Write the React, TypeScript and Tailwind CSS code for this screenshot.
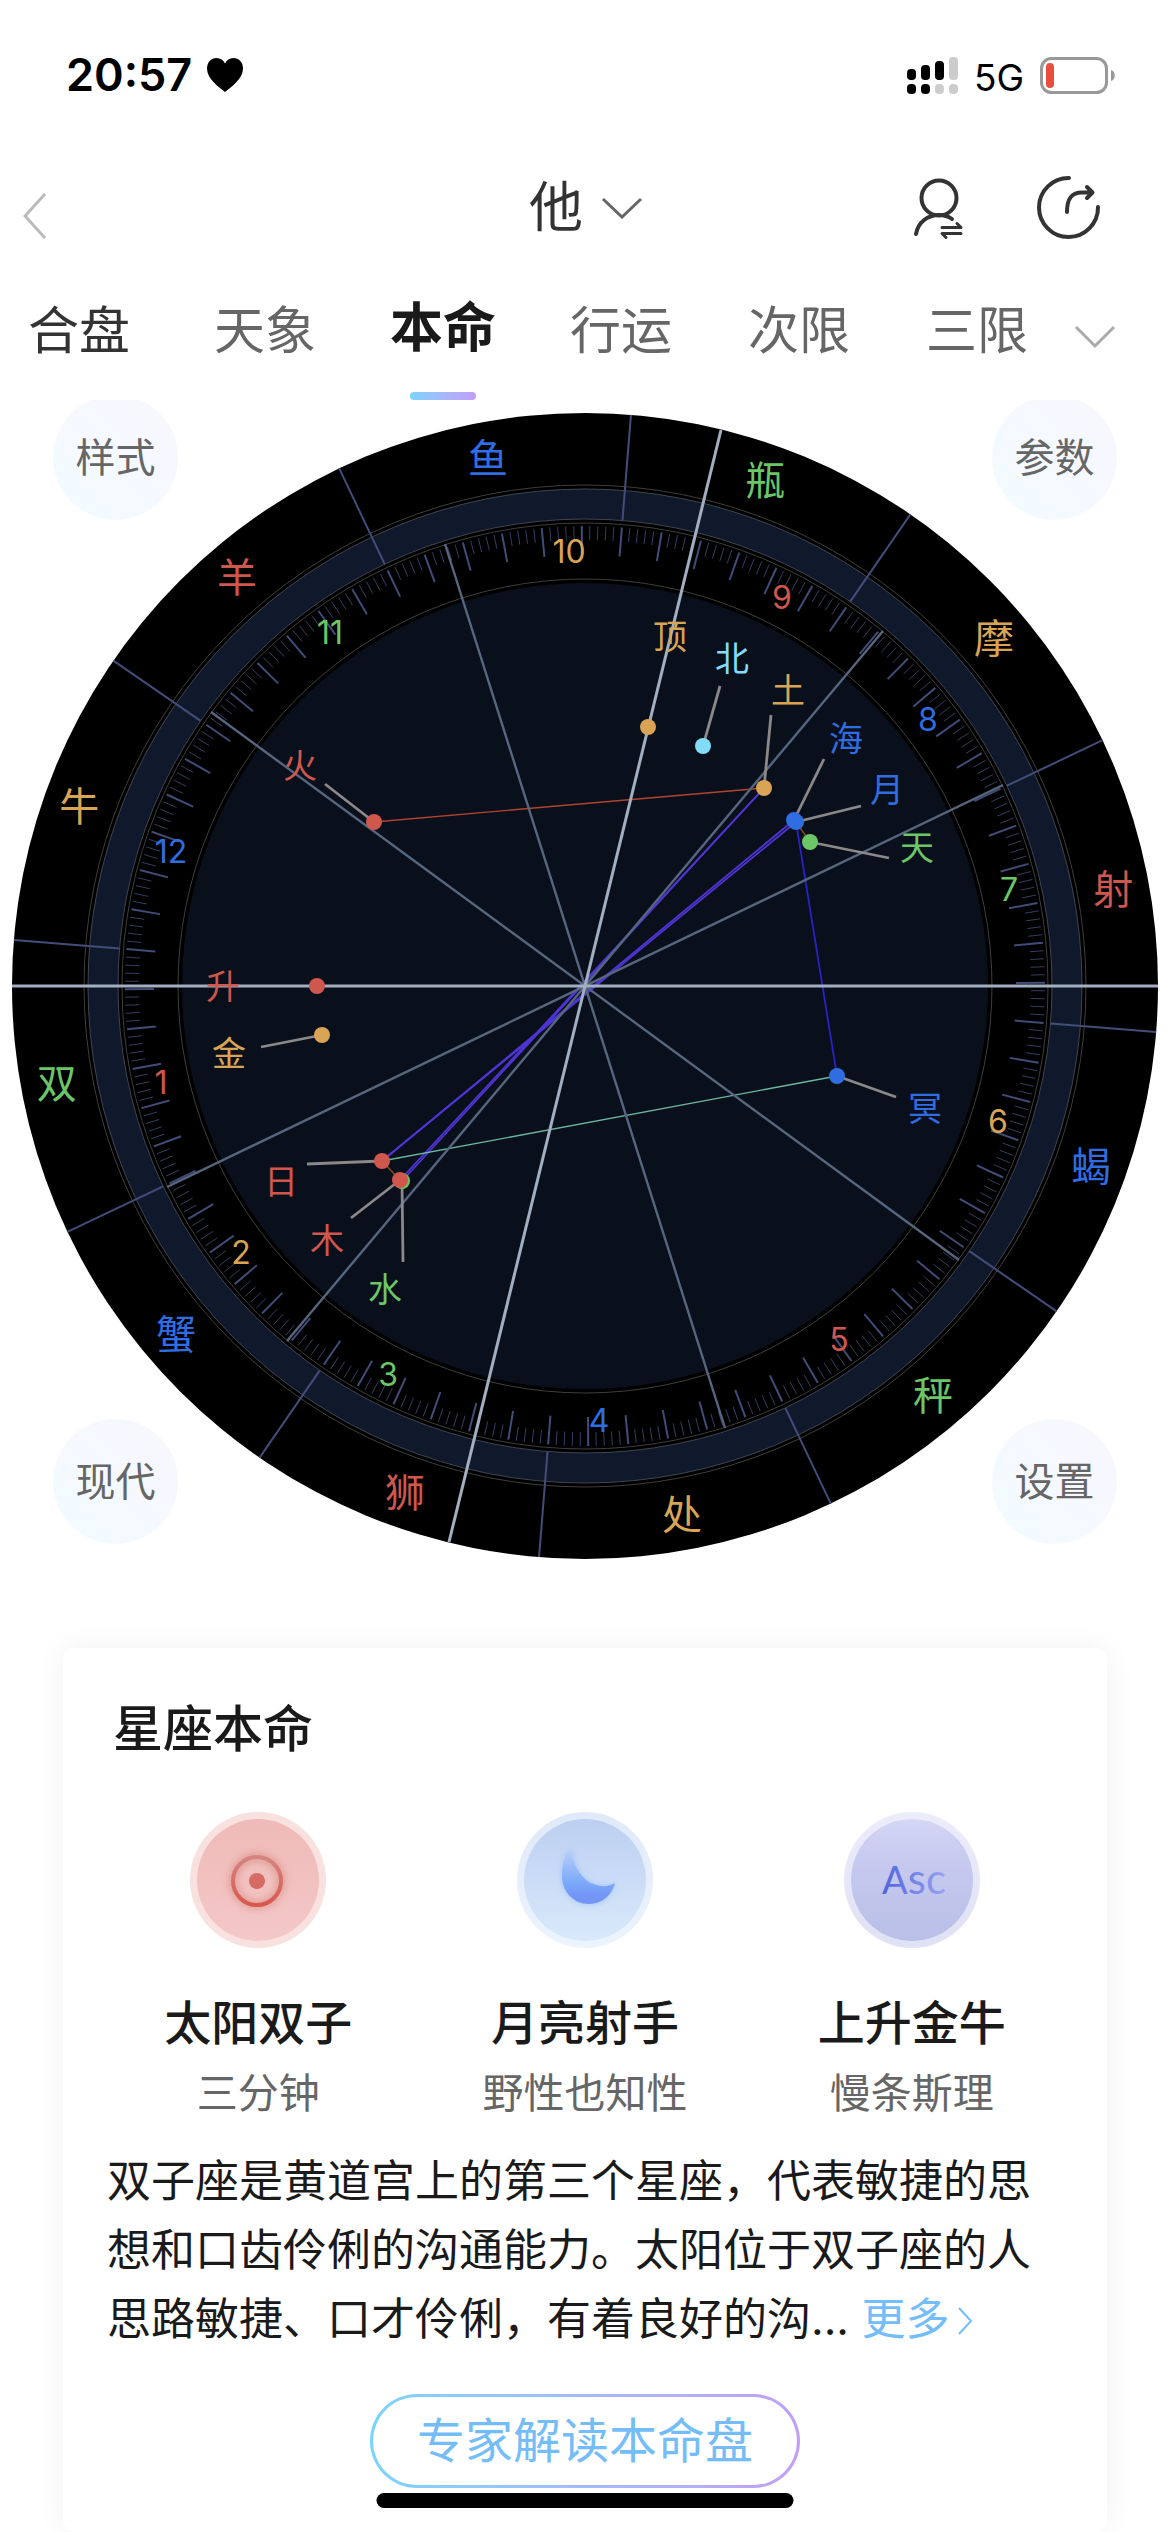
import React from "react";

const RED = "#cf574e";
const ORANGE = "#d9a455";
const GREEN = "#6cc667";
const BLUE = "#2f6de0";
const CYAN = "#82dcf8";

const R = 573;
const SIGN_OFFSET = 4.6;

function polar(deg: number, r: number): [number, number] {
  const a = (deg * Math.PI) / 180;
  return [-Math.cos(a) * r, -Math.sin(a) * r];
}

const signs: [string, string][] = [
  ["牛", ORANGE],
  ["羊", RED],
  ["鱼", BLUE],
  ["瓶", GREEN],
  ["摩", ORANGE],
  ["射", RED],
  ["蝎", BLUE],
  ["秤", GREEN],
  ["处", ORANGE],
  ["狮", RED],
  ["蟹", BLUE],
  ["双", GREEN],
];

const houses: [number, number, number, string][] = [
  [1, -424, 97, RED],
  [2, -344, 267, ORANGE],
  [3, -197, 389, GREEN],
  [4, 14, 435, BLUE],
  [5, 254, 354, RED],
  [6, 413, 136, ORANGE],
  [7, 424, -96, GREEN],
  [8, 343, -266, BLUE],
  [9, 197, -388, RED],
  [10, -16, -434, ORANGE],
  [11, -255, -353, GREEN],
  [12, -414, -134, BLUE],
];

const cusps: [number, number][] = [
  [140, 442],
  [374, 274],
  [-418, 201],
  [-298, 355],
];

type Planet = {
  name: string;
  color: string;
  dot: [number, number];
  label: [number, number];
  end?: [number, number];
};

const planets: Planet[] = [
  { name: "顶", color: ORANGE, dot: [63, -259], label: [85, -350] },
  { name: "北", color: CYAN, dot: [118, -240], label: [147, -328], end: [135, -300] },
  { name: "土", color: ORANGE, dot: [179, -198], label: [203, -296], end: [186, -271] },
  { name: "海", color: BLUE, dot: [209, -166], label: [261, -248], end: [239, -227] },
  { name: "月", color: BLUE, dot: [211, -164], label: [302, -197], end: [276, -180] },
  { name: "天", color: GREEN, dot: [225, -144], label: [332, -139], end: [304, -128] },
  { name: "火", color: RED, dot: [-211, -164], label: [-285, -221], end: [-260, -202] },
  { name: "升", color: RED, dot: [-268, 0], label: [-362, 0] },
  { name: "金", color: ORANGE, dot: [-263, 49], label: [-356, 67], end: [-324, 61] },
  { name: "日", color: RED, dot: [-203, 175], label: [-304, 195], end: [-278, 178] },
  { name: "水", color: GREEN, dot: [-183, 195], label: [-200, 303], end: [-182, 276] },
  { name: "木", color: RED, dot: [-185, 194], label: [-258, 254], end: [-234, 232] },
  { name: "冥", color: BLUE, dot: [252, 90], label: [340, 122], end: [311, 111] },
];

const aspects: [number, number, number, number, string][] = [
  [-211, -164, 179, -198, "#b04531"],
  [179, -198, -185, 194, "#4f35d4"],
  [179, -198, -183, 195, "#4f35d4"],
  [209, -166, -203, 175, "#4f35d4"],
  [211, -164, -203, 175, "#4f35d4"],
  [211, -164, 252, 90, "#2a22c4"],
  [-203, 175, 252, 90, "#6bb79e"],
  [211, -164, 225, -144, "#83501a"],
  [-203, 175, -185, 194, "#83501a"],
];

function Wheel() {
  return (
    <svg viewBox="-573 -573 1146 1146" className="block w-full" role="img" aria-label="本命星盘">
      <circle r={R} fill="#000" />
      <circle r={501} fill="none" stroke="#3e3e3c" strokeWidth={1} />
      <circle r={482} fill="none" stroke="#10192c" strokeWidth={30} />
      <circle r={497} fill="none" stroke="#3f444e" strokeWidth={1} />
      <circle r={467} fill="none" stroke="#3f444e" strokeWidth={1} />
      <circle r={463} fill="none" stroke="#3e3e3c" strokeWidth={1} />
      <circle r={407} fill="none" stroke="#3e3e3c" strokeWidth={1} />
      <circle r={403} fill="#090f1b" />

      {Array.from({ length: 360 }, (_, i) => {
        const major = i % 5 === 0;
        const [x1, y1] = polar(SIGN_OFFSET + i, 460);
        const [x2, y2] = polar(SIGN_OFFSET + i, major ? 431 : 446);
        return (
          <line key={i} x1={x1} y1={y1} x2={x2} y2={y2} stroke={major ? "#414c78" : "#353d62"} strokeWidth={major ? 2 : 1} />
        );
      })}

      {signs.map(([name], i) => {
        const [x1, y1] = polar(SIGN_OFFSET + i * 30, R);
        const [x2, y2] = polar(SIGN_OFFSET + i * 30, 467);
        return <line key={name} x1={x1} y1={y1} x2={x2} y2={y2} stroke="#434d79" strokeWidth={2} />;
      })}

      {houses.map(([n, x, y, color]) => (
        <text key={n} x={x} y={y + 11} fill={color} fontSize={32} textAnchor="middle">
          {n}
        </text>
      ))}
      {signs.map(([name, color], i) => {
        const [x, y] = polar(SIGN_OFFSET + 15 + i * 30, 537);
        return (
          <text key={name} x={x} y={y + 15} fill={color} fontSize={40} textAnchor="middle">
            {name}
          </text>
        );
      })}

      {aspects.map(([x1, y1, x2, y2, color], i) => (
        <line key={i} x1={x1} y1={y1} x2={x2} y2={y2} stroke={color} strokeWidth={i === 0 || i > 5 ? 1.4 : 1.8} />
      ))}
      {cusps.map(([x, y]) => (
        <line key={x} x1={-x} y1={-y} x2={x} y2={y} stroke="#56667f" strokeWidth={2.4} />
      ))}
      <line x1={136} y1={-556} x2={-136} y2={556} stroke="#a1afc1" strokeWidth={3} />
      <line x1={-R} y1={0} x2={R} y2={0} stroke="#a1afc1" strokeWidth={3} />

      {planets.map(
        (p) =>
          p.end && (
            <line key={p.name} x1={p.dot[0]} y1={p.dot[1]} x2={p.end[0]} y2={p.end[1]} stroke="#8a8888" strokeWidth={2.8} />
          ),
      )}
      {planets.map((p) => (
        <circle key={p.name} cx={p.dot[0]} cy={p.dot[1]} r={8} fill={p.color} />
      ))}
      {planets.map((p) => (
        <text key={p.name} x={p.label[0]} y={p.label[1] + 13} fill={p.color} fontSize={34} textAnchor="middle">
          {p.name}
        </text>
      ))}
    </svg>
  );
}

function StatusBar() {
  return (
    <div className="flex h-[132px] items-start justify-between pt-[54px] pr-[54px] pl-[66px] text-black">
      <div className="flex items-center gap-[14px]">
        <span className="text-[45px] leading-[42px] font-semibold">20:57</span>
        <svg viewBox="0 0 38 36" className="h-9 w-[38px]" aria-hidden="true">
          <path d="M19 35C13 30 1 22 1 11.500C1 5 5.500 1 10.500 1C14.500 1 17.500 3.200 19 6.500C20.500 3.200 23.500 1 27.500 1C32.500 1 37 5 37 11.500C37 22 25 30 19 35Z" />
        </svg>
      </div>
      <div className="flex items-center gap-4">
        <svg viewBox="0 0 51 38" className="h-[38px] w-[51px]" aria-hidden="true">
          <rect x="0" y="12" width="9" height="11" rx="4" />
          <rect x="14" y="8" width="9" height="15" rx="4" />
          <rect x="28" y="4" width="9" height="19" rx="4" />
          <rect x="42" y="0" width="9" height="23" rx="4" fill="#ccc" />
          <rect x="0" y="27" width="9" height="10" rx="4" />
          <rect x="14" y="27" width="9" height="10" rx="4" />
          <rect x="28" y="27" width="9" height="10" rx="4" fill="#ccc" />
          <rect x="42" y="27" width="9" height="10" rx="4" fill="#ccc" />
        </svg>
        <span className="pt-1 text-[37px] leading-[40px]">5G</span>
        <svg viewBox="0 0 76 38" className="h-[38px] w-[76px]" aria-hidden="true">
          <rect x="1.500" y="1.500" width="65" height="34" rx="10" fill="none" stroke="#999" strokeWidth="3" />
          <rect x="6" y="6" width="8" height="25" rx="4" fill="#ea4d3d" />
          <path d="M71 13C76 14 76 23 71 24Z" fill="#999" />
        </svg>
      </div>
    </div>
  );
}

function Header() {
  return (
    <header className="grid h-[146px] grid-cols-[1fr_auto_1fr] items-start">
      <button aria-label="返回" className="mt-[60px] ml-[23px] w-6">
        <svg viewBox="0 0 24 48" className="h-12 w-6" fill="none" stroke="#bbb" strokeWidth="3">
          <path d="M22 2L2 24L22 46" />
        </svg>
      </button>
      <button className="mt-10 ml-[2px] flex items-center gap-[18px] text-[54px] leading-[72px] text-[#333]">
        他
        <svg viewBox="0 0 42 22" className="h-[22px] w-[42px]" fill="none" stroke="#666" strokeWidth="3" aria-hidden="true">
          <path d="M2 2L21 20L40 2" />
        </svg>
      </button>
      <div className="mt-[42px] mr-[68px] flex justify-end gap-[71px]">
        <button aria-label="切换档案">
          <svg viewBox="0 0 52 66" className="h-[66px] w-[52px]" fill="none" stroke="#333" strokeWidth="4" strokeLinecap="round" strokeLinejoin="round">
            <circle cx="26" cy="24" r="17.500" />
            <path d="M3 60C5 48 15 41 26 41C31 41 35 42 39 45" />
            <path d="M29 53.500H48L44 49.500M29 59.500H48M29 59.500L33 63.500" strokeWidth="3" />
          </svg>
        </button>
        <button aria-label="分享">
          <svg viewBox="0 0 66 66" className="size-[66px]" fill="none" stroke="#333" strokeWidth="4" strokeLinecap="round" strokeLinejoin="round">
            <path d="M33 4A29.500 29.500 0 1 0 62 33" />
            <path d="M31 38C31 24 36 18.500 46 18.500H56M51 13L56.500 18.500L51 24" />
          </svg>
        </button>
      </div>
    </header>
  );
}

function Tabs() {
  return (
    <nav className="flex h-[122px] items-stretch text-[51px] leading-[72px] text-[#666]">
      <button className="w-[176px] shrink-0 pt-[17px] pl-7 text-left text-[#333]">
        <span className="block h-[105px]">合盘</span>
      </button>
      {["天象", "本命", "行运", "次限", "三限"].map((t) =>
        t === "本命" ? (
          <button key={t} aria-current="page" className="flex flex-1 flex-col items-center justify-between pt-[14px] text-[53px] font-bold text-[#1a1a1a]">
            {t}
            <span className="h-2 w-[66px] rounded-full bg-linear-to-r from-[#7ad3fb] to-[#c09df8]" />
          </button>
        ) : (
          <button key={t} className="flex flex-1 flex-col items-center pt-[17px]">
            {t}
          </button>
        ),
      )}
      <button aria-label="更多标签" className="w-[104px] shrink-0 pl-2">
        <svg viewBox="0 0 42 24" className="mb-1 h-6 w-[42px]" fill="none" stroke="#aaa" strokeWidth="3">
          <path d="M2 2L21 21L40 2" />
        </svg>
      </button>
    </nav>
  );
}

const cornerBase =
  "absolute size-[125px] rounded-full bg-linear-to-tr from-[#f1fcff] to-[#f9f6fe] text-[40px] leading-[60px] text-[#666]";

function ChartSection() {
  return (
    <section className="relative overflow-hidden px-3 pt-[13px]">
      <Wheel />
      <button className={`${cornerBase} -top-[5px] left-[53px]`}>样式</button>
      <button className={`${cornerBase} -top-[5px] right-[53px]`}>参数</button>
      <button className={`${cornerBase} bottom-[15px] left-[53px]`}>现代</button>
      <button className={`${cornerBase} right-[53px] bottom-[15px]`}>设置</button>
    </section>
  );
}

function SunIcon() {
  return (
    <svg viewBox="0 0 136 136" className="size-[136px]" aria-hidden="true">
      <defs>
        <linearGradient id="sunBg" x1="0" y1="0" x2="0" y2="1">
          <stop offset="0" stopColor="#efbab7" />
          <stop offset="1" stopColor="#f3c8c8" />
        </linearGradient>
        <linearGradient id="sunFg" x1="0" y1="0" x2="0" y2="1">
          <stop offset="0" stopColor="#d58580" />
          <stop offset="1" stopColor="#d8574d" />
        </linearGradient>
        <filter id="sunGlow" x="-50%" y="-50%" width="200%" height="200%">
          <feGaussianBlur stdDeviation="4" />
        </filter>
      </defs>
      <circle cx="68" cy="68" r="68" fill="#f9e1e0" />
      <circle cx="68" cy="68" r="61" fill="url(#sunBg)" />
      <circle cx="67" cy="69" r="24" fill="none" stroke="#da8f88" strokeWidth="6" filter="url(#sunGlow)" />
      <circle cx="67" cy="69" r="24" fill="none" stroke="url(#sunFg)" strokeWidth="4" />
      <circle cx="67" cy="69" r="8" fill="#d56b64" />
    </svg>
  );
}

function MoonIcon() {
  const d = "M54 36C47 44 45 54 45 64C45 80 57 92 72 92C85 92 95 83 98 71C90 76 78 75 69 68C60 60 55 48 54 36Z";
  return (
    <svg viewBox="0 0 136 136" className="size-[136px]" aria-hidden="true">
      <defs>
        <linearGradient id="moonRing" x1="0" y1="0" x2="0" y2="1">
          <stop offset="0" stopColor="#e0e9f8" />
          <stop offset="1" stopColor="#ecf4fe" />
        </linearGradient>
        <linearGradient id="moonBg" x1="0" y1="0" x2="0" y2="1">
          <stop offset="0" stopColor="#bccff1" />
          <stop offset="1" stopColor="#d9e9fb" />
        </linearGradient>
        <linearGradient id="moonFg" x1="0" y1="0" x2="0" y2="1">
          <stop offset="0" stopColor="#bdd1f5" />
          <stop offset="0.600" stopColor="#7dabf9" />
          <stop offset="0.850" stopColor="#7295f6" />
        </linearGradient>
        <filter id="moonGlow" x="-50%" y="-50%" width="200%" height="200%">
          <feGaussianBlur stdDeviation="3" />
        </filter>
      </defs>
      <circle cx="68" cy="68" r="68" fill="url(#moonRing)" />
      <circle cx="68" cy="68" r="61" fill="url(#moonBg)" />
      <path d={d} fill="#a3c2f8" filter="url(#moonGlow)" />
      <path d={d} fill="url(#moonFg)" />
    </svg>
  );
}

function AscIcon() {
  return (
    <svg viewBox="0 0 136 136" className="size-[136px]">
      <defs>
        <linearGradient id="ascRing" x1="0" y1="0" x2="0" y2="1">
          <stop offset="0" stopColor="#ececfb" />
          <stop offset="1" stopColor="#dfe1f4" />
        </linearGradient>
        <linearGradient id="ascBg" x1="0" y1="0" x2="0" y2="1">
          <stop offset="0" stopColor="#d5d7f5" />
          <stop offset="0.300" stopColor="#c8caf0" />
          <stop offset="1" stopColor="#b9bfe7" />
        </linearGradient>
        <linearGradient id="ascFg" x1="0" y1="0" x2="1" y2="0">
          <stop offset="0" stopColor="#5064da" />
          <stop offset="1" stopColor="#9ba5f1" />
        </linearGradient>
      </defs>
      <circle cx="68" cy="68" r="68" fill="url(#ascRing)" />
      <circle cx="68" cy="68" r="61" fill="url(#ascBg)" />
      <text x="70" y="82" fontSize="38" textAnchor="middle" fill="url(#ascFg)" fontFamily="Lato, sans-serif">
        A<tspan fontSize="42">sc</tspan>
      </text>
    </svg>
  );
}

const traits = [
  { icon: <SunIcon />, title: "太阳双子", sub: "三分钟" },
  { icon: <MoonIcon />, title: "月亮射手", sub: "野性也知性" },
  { icon: <AscIcon />, title: "上升金牛", sub: "慢条斯理" },
];

function NatalCard() {
  return (
    <section className="mx-[63px] mt-[89px] rounded-xl bg-white pt-[45px] pb-11 shadow-[0_0_32px_rgba(0,0,0,0.06)]">
      <h2 className="pl-[50px] text-[50px] leading-[72px] font-medium text-[#1a1a1a]">星座本命</h2>
      <div className="mx-8 mt-[47px] grid grid-cols-3">
        {traits.map((t) => (
          <div key={t.title} className="flex flex-col items-center">
            {t.icon}
            <h3 className="mt-[43px] text-[47px] leading-[64px] font-medium text-[#1a1a1a]">{t.title}</h3>
            <p className="mt-2 text-[41px] leading-[60px] text-[#666]">{t.sub}</p>
          </div>
        ))}
      </div>
      <p className="mx-11 mt-6 text-[44px] leading-[69px] text-[#1a1a1a]">
        双子座是黄道宫上的第三个星座，代表敏捷的思想和口齿伶俐的沟通能力。太阳位于双子座的人思路敏捷、口才伶俐，有着良好的沟...{" "}
        <a href="#more" className="whitespace-nowrap text-[#74bdf8]">
          更多
          <svg viewBox="0 0 16 28" className="ml-2 inline-block h-7 w-4 align-baseline" fill="none" stroke="currentColor" strokeWidth="2" aria-hidden="true">
            <path d="M2 1L14 14L2 27" />
          </svg>
        </a>
      </p>
      <div className="mt-10 flex justify-center">
        <button className="rounded-full bg-linear-to-r from-[#79d4fa] to-[#c09ff7] p-[3px]">
          <span className="block rounded-full bg-white px-11 text-[48px] leading-[88px] text-[#74bdf8]">专家解读本命盘</span>
        </button>
      </div>
    </section>
  );
}

export default function App() {
  return (
    <div
      lang="zh-CN"
      className="relative min-h-screen overflow-hidden bg-white font-['Inter','Noto_Sans_CJK_SC',sans-serif]"
    >
      <StatusBar />
      <Header />
      <Tabs />
      <main>
        <ChartSection />
        <NatalCard />
      </main>
      <div className="absolute bottom-6 left-1/2 h-[15px] w-[417px] -translate-x-1/2 rounded-full bg-black" />
    </div>
  );
}
